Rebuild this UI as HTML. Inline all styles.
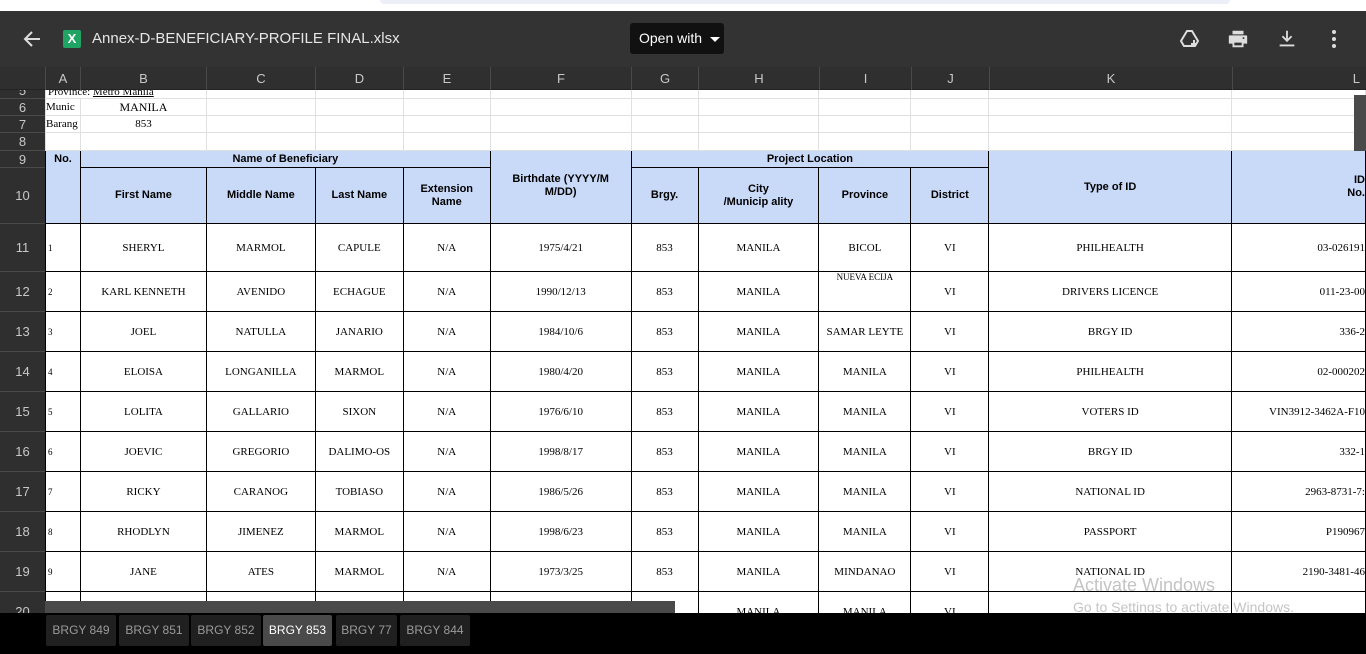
<!DOCTYPE html>
<html><head><meta charset="utf-8"><style>
*{margin:0;padding:0;box-sizing:border-box}
body{width:1366px;height:654px;overflow:hidden;background:#fff;position:relative;font-family:"Liberation Sans",sans-serif}
.abs{position:absolute}
#top{left:0;top:0;width:1366px;height:11px;background:#fff}
#top div{position:absolute;left:380px;top:0;width:850px;height:4px;background:#eceef8;border-radius:0 0 8px 8px}
#hdr{left:0;top:11px;width:1366px;height:56px;background:#333}
#colh{left:0;top:67px;width:1366px;height:23px;background:#2f2f2f;border-bottom:1px solid #222}
.ch{position:absolute;top:0;height:23px;line-height:23px;text-align:center;color:#c8c8c8;font-size:13px;border-left:1px solid #4a4a4a}
#rowh{left:0;top:90px;width:45px;height:523px;background:#2f2f2f;overflow:hidden}
.rh{position:absolute;left:0;width:45px;color:#c8c8c8;font-size:13px;text-align:center;border-top:1px solid #4a4a4a;display:flex;align-items:center;justify-content:center}
#grid{left:45px;top:90px;width:1321px;height:523px;overflow:hidden}
table{border-collapse:collapse;table-layout:fixed;position:absolute;left:0;top:-8px}
td{border:1px solid #e0e0e0;font-family:"Liberation Serif",serif;font-size:11px;text-align:center;overflow:hidden;white-space:nowrap;padding:0 2px;color:#000}
.h td,.d td{border:1px solid #000}
.h td{background:#c9daf8;font-family:"Liberation Sans",sans-serif;font-weight:bold;font-size:11px;white-space:normal;line-height:13px}
.d td.n{text-align:left;font-size:9px}
.d td.r{text-align:right;padding-right:0}
#tabs{left:0;top:613px;width:1366px;height:41px;background:#000}
.tab{position:absolute;top:2px;height:31px;line-height:31px;background:#202020;color:#9a9a9a;font-size:12px;text-align:center;border-radius:2px}
</style></head><body>
<div id="top" class="abs"><div></div></div>
<div id="hdr" class="abs">
<svg class="abs" style="left:22px;top:18px" width="20" height="20" viewBox="0 0 20 20"><path d="M18 10H4M10 3L3 10l7 7" stroke="#ddd" stroke-width="2" fill="none"/></svg>
<div class="abs" style="left:63px;top:19px;width:18px;height:18px;background:#1fa463;border-radius:2px;color:#fff;font-size:13px;font-weight:bold;text-align:center;line-height:18px">X</div>
<div class="abs" style="left:92px;top:19px;color:#e6e6e6;font-size:15px;line-height:18px">Annex-D-BENEFICIARY-PROFILE FINAL.xlsx</div>
<div class="abs" style="left:630px;top:12px;width:94px;height:31px;background:#111;border-radius:3px;color:#fff;font-size:14px;line-height:31px;padding-left:9px">Open with <span style="display:inline-block;width:0;height:0;border-left:5px solid transparent;border-right:5px solid transparent;border-top:5px solid #fff;margin-left:4px;vertical-align:middle"></span></div>
<svg class="abs" style="left:1178px;top:16px" width="24" height="24" viewBox="0 0 24 24" fill="none" stroke="#ddd" stroke-width="2"><path d="M9 4h5l6 10-3 5H6L3 14z"/><path d="M16 13v7M13 17h6" stroke-width="2"/></svg>
<svg class="abs" style="left:1227px;top:17px" width="22" height="22" viewBox="0 0 24 24"><path fill="#ddd" d="M6 3h12v4H6zM3 8h18a1 1 0 011 1v8h-4v4H6v-4H2V9a1 1 0 011-1zm5 8v3h8v-3zm10-6a1 1 0 100 2 1 1 0 000-2z"/></svg>
<svg class="abs" style="left:1276px;top:17px" width="22" height="22" viewBox="0 0 24 24" fill="none" stroke="#ddd" stroke-width="2"><path d="M12 3v11M7 9l5 5 5-5M4 19h16"/></svg>
<svg class="abs" style="left:1324px;top:17px" width="20" height="22" viewBox="0 0 20 22" fill="#ddd"><circle cx="10" cy="4" r="2"/><circle cx="10" cy="11" r="2"/><circle cx="10" cy="18" r="2"/></svg>
</div>
<div id="colh" class="abs">
<div class="ch" style="left:45px;width:35px">A</div><div class="ch" style="left:80px;width:126px">B</div><div class="ch" style="left:206px;width:109px">C</div><div class="ch" style="left:315px;width:88px">D</div><div class="ch" style="left:403px;width:87px">E</div><div class="ch" style="left:490px;width:141px">F</div><div class="ch" style="left:631px;width:67px">G</div><div class="ch" style="left:698px;width:121px">H</div><div class="ch" style="left:819px;width:92px">I</div><div class="ch" style="left:911px;width:78px">J</div><div class="ch" style="left:989px;width:243px">K</div><div class="ch" style="left:1232px;width:134px;text-align:right;padding-right:6px">L</div>
</div>
<div id="grid" class="abs">
<table>
<colgroup><col style="width:35px"><col style="width:126px"><col style="width:109px"><col style="width:88px"><col style="width:87px"><col style="width:141px"><col style="width:67px"><col style="width:121px"><col style="width:92px"><col style="width:78px"><col style="width:243px"><col style="width:134px"></colgroup>
<tr style="height:16px"><td colspan="2" style="text-align:left;vertical-align:bottom">Province: <u>Metro Manila</u></td><td></td><td></td><td></td><td></td><td></td><td></td><td></td><td></td><td></td><td></td></tr>
<tr style="height:17px"><td style="text-align:left;padding:0">Munic</td><td style="font-size:12px">MANILA</td><td></td><td></td><td></td><td></td><td></td><td></td><td></td><td></td><td></td><td></td></tr>
<tr style="height:17px"><td style="text-align:left;padding:0">Barang</td><td>853</td><td></td><td></td><td></td><td></td><td></td><td></td><td></td><td></td><td></td><td></td></tr>
<tr style="height:18px"><td></td><td></td><td></td><td></td><td></td><td></td><td></td><td></td><td></td><td></td><td></td><td></td></tr>
<tr class="h" style="height:17px"><td rowspan="2" style="vertical-align:top;padding-top:2px">No.</td><td colspan="4">Name of Beneficiary</td><td rowspan="2" style="vertical-align:top;padding:22px 14px 0">Birthdate (YYYY/M M/DD)</td><td colspan="4">Project Location</td><td rowspan="2">Type of ID</td><td rowspan="2" style="text-align:right;padding-right:0">ID<br>No.</td></tr>
<tr class="h" style="height:56px"><td>First Name</td><td>Middle Name</td><td>Last Name</td><td>Extension Name</td><td>Brgy.</td><td>City<br>/Municip ality</td><td>Province</td><td>District</td></tr>
<tr class="d" style="height:48px"><td class="n">1</td><td>SHERYL</td><td>MARMOL</td><td>CAPULE</td><td>N/A</td><td>1975/4/21</td><td>853</td><td>MANILA</td><td>BICOL</td><td>VI</td><td>PHILHEALTH</td><td class="r">03-026191</td></tr>
<tr class="d" style="height:40px"><td class="n">2</td><td>KARL KENNETH</td><td>AVENIDO</td><td>ECHAGUE</td><td>N/A</td><td>1990/12/13</td><td>853</td><td>MANILA</td><td style="vertical-align:top;font-size:9px">NUEVA ECIJA</td><td>VI</td><td>DRIVERS LICENCE</td><td class="r">011-23-00</td></tr>
<tr class="d" style="height:40px"><td class="n">3</td><td>JOEL</td><td>NATULLA</td><td>JANARIO</td><td>N/A</td><td>1984/10/6</td><td>853</td><td>MANILA</td><td>SAMAR LEYTE</td><td>VI</td><td>BRGY ID</td><td class="r">336-2</td></tr>
<tr class="d" style="height:40px"><td class="n">4</td><td>ELOISA</td><td>LONGANILLA</td><td>MARMOL</td><td>N/A</td><td>1980/4/20</td><td>853</td><td>MANILA</td><td>MANILA</td><td>VI</td><td>PHILHEALTH</td><td class="r">02-000202</td></tr>
<tr class="d" style="height:40px"><td class="n">5</td><td>LOLITA</td><td>GALLARIO</td><td>SIXON</td><td>N/A</td><td>1976/6/10</td><td>853</td><td>MANILA</td><td>MANILA</td><td>VI</td><td>VOTERS ID</td><td class="r">VIN3912-3462A-F10</td></tr>
<tr class="d" style="height:40px"><td class="n">6</td><td>JOEVIC</td><td>GREGORIO</td><td>DALIMO-OS</td><td>N/A</td><td>1998/8/17</td><td>853</td><td>MANILA</td><td>MANILA</td><td>VI</td><td>BRGY ID</td><td class="r">332-1</td></tr>
<tr class="d" style="height:40px"><td class="n">7</td><td>RICKY</td><td>CARANOG</td><td>TOBIASO</td><td>N/A</td><td>1986/5/26</td><td>853</td><td>MANILA</td><td>MANILA</td><td>VI</td><td>NATIONAL ID</td><td class="r">2963-8731-7:</td></tr>
<tr class="d" style="height:40px"><td class="n">8</td><td>RHODLYN</td><td>JIMENEZ</td><td>MARMOL</td><td>N/A</td><td>1998/6/23</td><td>853</td><td>MANILA</td><td>MANILA</td><td>VI</td><td>PASSPORT</td><td class="r">P190967</td></tr>
<tr class="d" style="height:40px"><td class="n">9</td><td>JANE</td><td>ATES</td><td>MARMOL</td><td>N/A</td><td>1973/3/25</td><td>853</td><td>MANILA</td><td>MINDANAO</td><td>VI</td><td>NATIONAL ID</td><td class="r">2190-3481-46</td></tr>
<tr class="d" style="height:40px"><td class="n"></td><td></td><td></td><td></td><td></td><td></td><td></td><td>MANILA</td><td>MANILA</td><td>VI</td><td></td><td class="r"></td></tr>
</table>
<div class="abs" style="left:1309px;top:5px;width:12px;height:56px;background:#4a4a4a"></div>
</div>
<div id="rowh" class="abs">
<div class="rh" style="top:-8px;height:16px">5</div>
<div class="rh" style="top:8px;height:17px">6</div>
<div class="rh" style="top:25px;height:17px">7</div>
<div class="rh" style="top:42px;height:18px">8</div>
<div class="rh" style="top:60px;height:17px">9</div>
<div class="rh" style="top:77px;height:56px">10</div>
<div class="rh" style="top:133px;height:48px">11</div>
<div class="rh" style="top:181px;height:40px">12</div>
<div class="rh" style="top:221px;height:40px">13</div>
<div class="rh" style="top:261px;height:40px">14</div>
<div class="rh" style="top:301px;height:40px">15</div>
<div class="rh" style="top:341px;height:40px">16</div>
<div class="rh" style="top:381px;height:40px">17</div>
<div class="rh" style="top:421px;height:40px">18</div>
<div class="rh" style="top:461px;height:40px">19</div>
<div class="rh" style="top:501px;height:40px">20</div>
</div>
<div class="abs" style="left:45px;top:601px;width:630px;height:12px;background:#4a4a4a"></div>
<div class="abs" style="left:1073px;top:575px;color:#c4c4c4;font-size:18px">Activate Windows</div>
<div class="abs" style="left:1073px;top:599px;color:#c4c4c4;font-size:14px;white-space:nowrap">Go to Settings to activate Windows.</div>
<div id="tabs" class="abs">
<div class="tab" style="left:46px;width:70px">BRGY 849</div>
<div class="tab" style="left:119px;width:70px">BRGY 851</div>
<div class="tab" style="left:191px;width:70px">BRGY 852</div>
<div class="tab" style="left:263px;width:69px;background:#4a4a4a;color:#fff">BRGY 853</div>
<div class="tab" style="left:336px;width:61px">BRGY 77</div>
<div class="tab" style="left:400px;width:70px">BRGY 844</div>
</div>
</body></html>
